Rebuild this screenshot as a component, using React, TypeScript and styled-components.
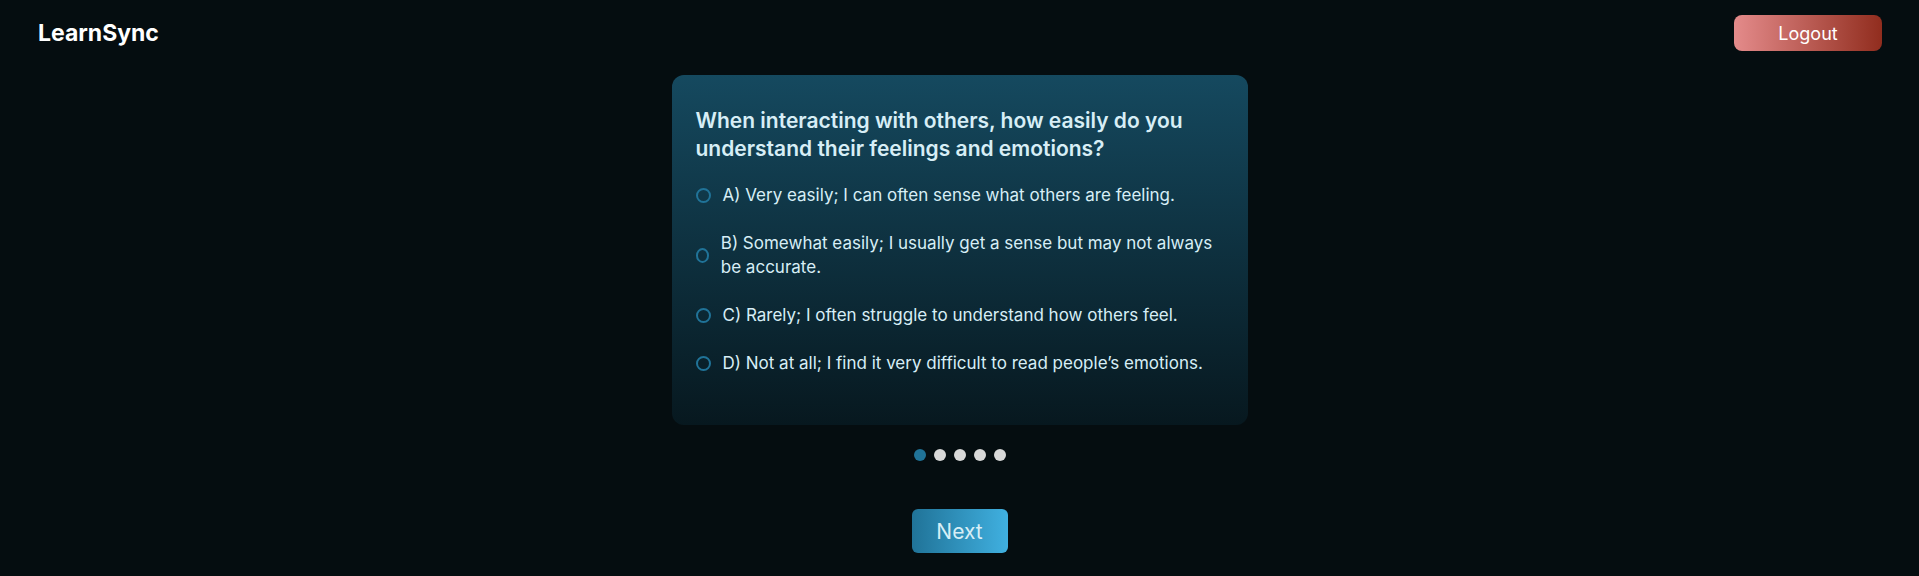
import React, { useState } from "react";
import styled, { createGlobalStyle } from "styled-components";

const GlobalStyle = createGlobalStyle`
  *, *::before, *::after { box-sizing: border-box; }
  body {
    margin: 0;
    background: #050d10;
    color: #d7eef6;
    font-family: Inter, "Liberation Sans", sans-serif;
    font-size: 17px;
    line-height: 24px;
  }
`;

const Page = styled.div`
  display: flex;
  flex-direction: column;
  min-height: 100vh;
`;

const Header = styled.header`
  display: flex;
  align-items: center;
  justify-content: space-between;
  padding: 15px 37px 0 38px;
`;

const Brand = styled.a`
  color: #fff;
  font-size: 23px;
  font-weight: 700;
  line-height: 32px;
  text-decoration: none;
`;

const Button = styled.button`
  border: 0;
  cursor: pointer;
  font-family: inherit;
`;

const LogoutButton = styled(Button)`
  width: 148px;
  height: 36px;
  border-radius: 8px;
  background: linear-gradient(to right, #e48b8b, #912d1e);
  color: #fff;
  font-size: 18px;
`;

const NextButton = styled(Button)`
  min-width: 96px;
  height: 44px;
  padding: 0 24px;
  margin: 48px 0 22px;
  border-radius: 6px;
  background: linear-gradient(to right, #207398, #40b0e0);
  color: #d7eef6;
  font-size: 21px;
`;

const Main = styled.main`
  display: flex;
  flex-direction: column;
  align-items: center;
  padding-top: 24px;
`;

const Card = styled.fieldset`
  width: 100%;
  max-width: 576px;
  margin: 0;
  padding: 32px 24px 50px;
  border: 0;
  border-radius: 12px;
  background: linear-gradient(to bottom, #15495f, #07181f);
`;

const Question = styled.legend`
  float: left;
  width: 100%;
  margin-bottom: 20px;
  padding: 0;
  font-size: 21px;
  font-weight: 600;
  line-height: 28px;
`;

const Options = styled.div`
  clear: both;
  display: flex;
  flex-direction: column;
  gap: 24px;
`;

const Option = styled.label`
  display: flex;
  align-items: center;
  gap: 12px;
  cursor: pointer;
`;

const Radio = styled.input`
  appearance: none;
  flex: 0 1 15px;
  width: 15px;
  height: 15px;
  margin: 0;
  border: 2px solid #207398;
  border-radius: 50%;
  &:checked { background: #207398; }
`;

const Dots = styled.div`
  display: flex;
  gap: 8px;
  margin-top: 24px;
`;

const Dot = styled.span<{ $active: boolean }>`
  width: 12px;
  height: 12px;
  border-radius: 50%;
  background: ${(p) => (p.$active ? "#207398" : "#d9d9d9")};
`;

const options = [
  "A) Very easily; I can often sense what others are feeling.",
  "B) Somewhat easily; I usually get a sense but may not always be accurate.",
  "C) Rarely; I often struggle to understand how others feel.",
  "D) Not at all; I find it very difficult to read people’s emotions.",
];

export default function App() {
  const [selected, setSelected] = useState<number | null>(null);
  return (
    <Page>
      <GlobalStyle />
      <Header>
        <Brand href="#">LearnSync</Brand>
        <LogoutButton type="button">Logout</LogoutButton>
      </Header>
      <Main>
        <Card>
          <Question>
            When interacting with others, how easily do you understand their feelings and emotions?
          </Question>
          <Options>
            {options.map((text, i) => (
              <Option key={text}>
                <Radio
                  type="radio"
                  name="answer"
                  checked={selected === i}
                  onChange={() => setSelected(i)}
                />
                <span>{text}</span>
              </Option>
            ))}
          </Options>
        </Card>
        <Dots>
          {[0, 1, 2, 3, 4].map((i) => (
            <Dot key={i} $active={i === 0} />
          ))}
        </Dots>
        <NextButton type="button">Next</NextButton>
      </Main>
    </Page>
  );
}
